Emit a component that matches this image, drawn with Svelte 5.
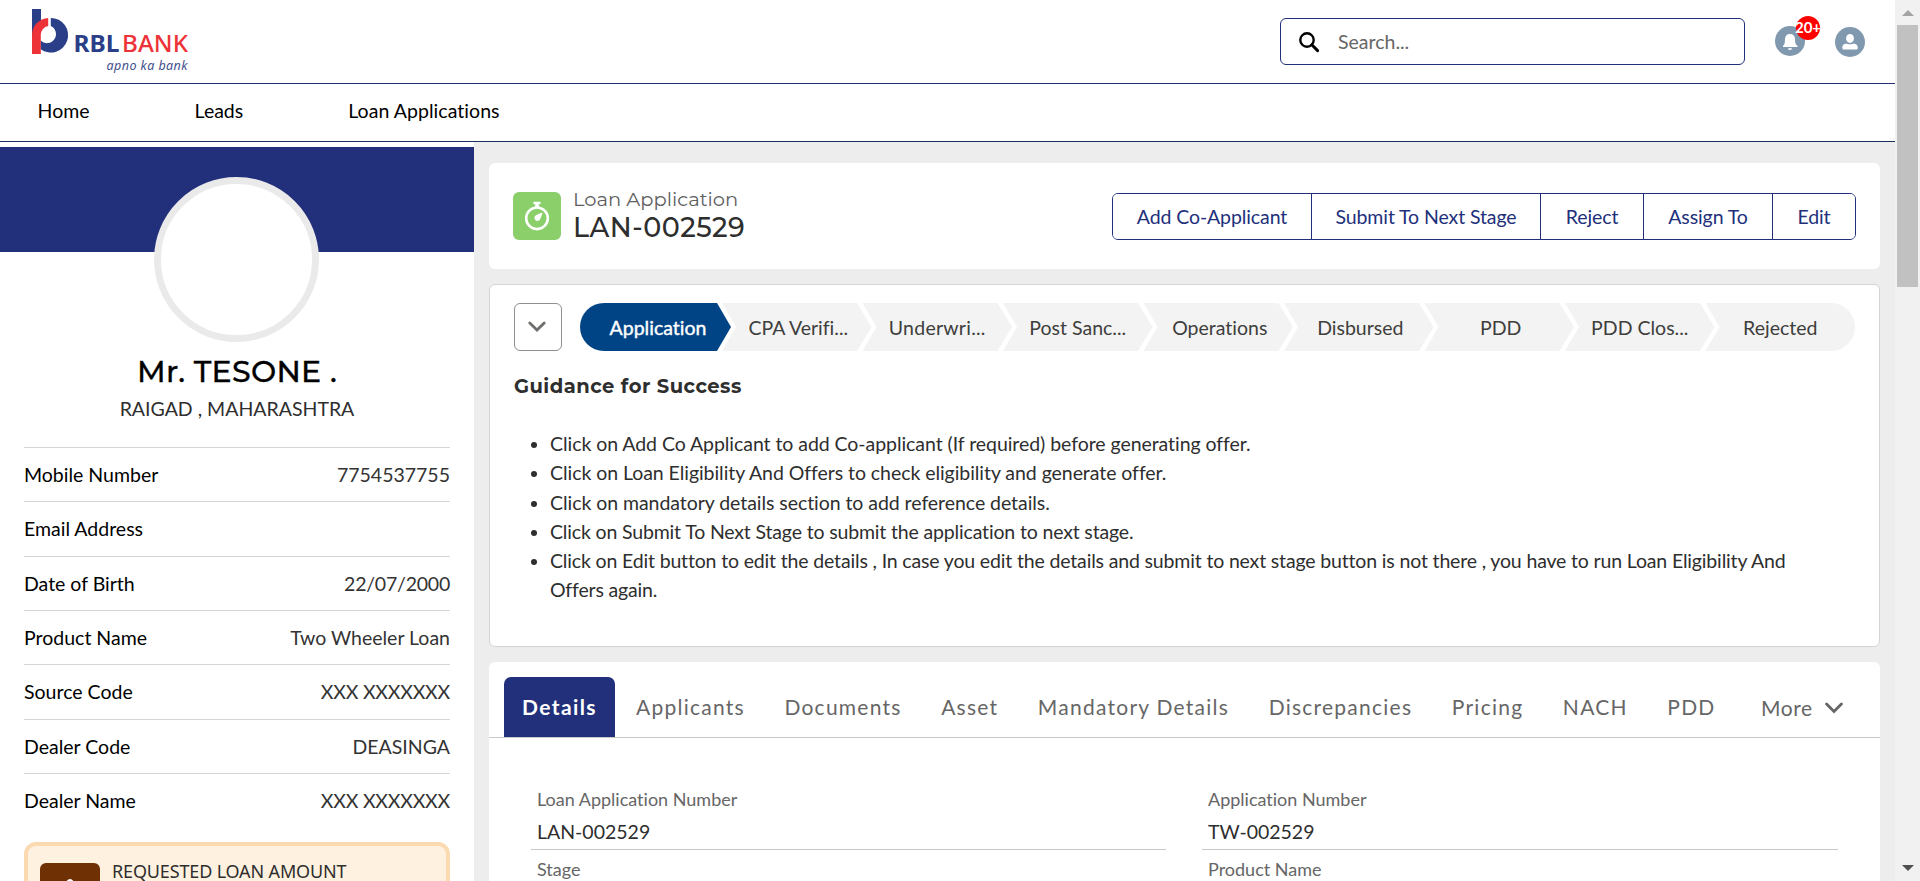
<script>
  const menu = ['Home', 'Leads', 'Loan Applications'];
  const facts = [
    ['Mobile Number', '7754537755'],
    ['Email Address', ''],
    ['Date of Birth', '22/07/2000'],
    ['Product Name', 'Two Wheeler Loan'],
    ['Source Code', 'XXX XXXXXXX'],
    ['Dealer Code', 'DEASINGA'],
    ['Dealer Name', 'XXX XXXXXXX']
  ];
  const actions = ['Add Co-Applicant', 'Submit To Next Stage', 'Reject', 'Assign To', 'Edit'];
  const stages = ['Application', 'CPA Verifi...', 'Underwri...', 'Post Sanc...', 'Operations', 'Disbursed', 'PDD', 'PDD Clos...', 'Rejected'];
  const guidance = [
    ['Click on Add Co Applicant to add Co-applicant (If required) before generating offer.', 'wide'],
    ['Click on Loan Eligibility And Offers to check eligibility and generate offer.', 'wide'],
    ['Click on mandatory details section to add reference details.', 'wide'],
    ['Click on Submit To Next Stage to submit the application to next stage.', 'tight'],
    ['Click on Edit button to edit the details , In case you edit the details and submit to next stage button is not there , you have to run Loan Eligibility And Offers again.', 'tight']
  ];
  const tabs = ['Details', 'Applicants', 'Documents', 'Asset', 'Mandatory Details', 'Discrepancies', 'Pricing', 'NACH', 'PDD'];
  const fields = [
    ['Loan Application Number', 'LAN-002529'],
    ['Application Number', 'TW-002529'],
    ['Stage', ''],
    ['Product Name', '']
  ];
</script>

<div class="window">
  <div class="page">
    <header>
      <svg class="logo" width="160" height="76" viewBox="0 0 160 76">
        <path d="M0 9H9V28L0 38Z" fill="#2b3f88" />
        <path d="M18.8 17.9A17.3 17.3 0 1 1 8.6 49.2L8.6 40.5A9 9 0 1 0 18.8 26Z" fill="#2b3f88" />
        <path d="M0 54V35.2A17.3 17.3 0 0 1 16.2 17.9V26A9 9 0 0 0 8.8 35.2V54Z" fill="#ed3338" />
        <text x="41.5" y="52" class="rbl" textLength="46" lengthAdjust="spacingAndGlyphs">RBL</text>
        <text x="90" y="52" class="bnk" textLength="66" lengthAdjust="spacingAndGlyphs">BANK</text>
        <text x="74.5" y="70" class="tag" textLength="81">apno ka bank</text>
      </svg>
      <div class="tools">
        <div class="search">
          <svg width="22" height="22" viewBox="0 0 22 22" fill="none" stroke="#000">
            <circle cx="9" cy="9" r="6.7" stroke-width="2.4" />
            <path d="M13.8 13.8L19.6 19.6" stroke-width="3" stroke-linecap="round" />
          </svg>
          <span>Search...</span>
        </div>
        <div class="bell">
          <svg width="30" height="30" viewBox="0 0 30 30">
            <circle cx="15" cy="15" r="15" fill="#8199af" />
            <path d="M8 20.4Q8 19.5 9 18.8Q10 17.6 10 13.5Q10 8 15 8Q20 8 20 13.5Q20 17.6 21.2 18.8Q22.6 19.5 22.6 20.4Q22.6 21 22 21H8.4Q8 21 8 20.4Z" fill="#fff" />
            <path d="M13 22.2H17Q16.8 24.1 15 24.1Q13.2 24.1 13 22.2Z" fill="#fff" />
          </svg>
          <b>20+</b>
        </div>
        <svg class="user" width="30" height="30" viewBox="0 0 30 30">
          <circle cx="15" cy="15" r="15" fill="#8199af" />
          <ellipse cx="15" cy="11.4" rx="3.9" ry="4.5" fill="#fff" />
          <path d="M7.3 20.5Q7.3 16.8 11.5 16.4Q15 18.2 18.5 16.4Q22.8 16.8 22.8 20.5V21Q22.8 22.6 21.2 22.6H9Q7.3 22.6 7.3 21Z" fill="#fff" />
        </svg>
      </div>
    </header>
    <nav>
      {#each menu as item}<a>{item}</a>{/each}
    </nav>
    <div class="body">
      <aside>
        <div class="cover"></div>
        <div class="avatar"></div>
        <h1>Mr. TESONE .</h1>
        <p class="place">RAIGAD , MAHARASHTRA</p>
        <dl>
          {#each facts as [k, v]}
            <div><dt>{k}</dt><dd class:snug={v.includes('/') || v.startsWith('XXX')}>{v}</dd></div>
          {/each}
        </dl>
        <div class="amount">
          <div class="coin">
            <svg width="60" height="60" viewBox="0 0 60 60"><path d="M25 40V21Q27 16 30 16Q33 16 35 21V40Z" fill="#fff" /></svg>
          </div>
          <span>REQUESTED LOAN AMOUNT</span>
        </div>
      </aside>
      <main>
        <section class="card head">
          <svg width="48" height="48" viewBox="0 0 48 48">
            <rect width="48" height="48" rx="6" fill="#8bcf6a" />
            <circle cx="24" cy="26.3" r="10.8" fill="none" stroke="#fff" stroke-width="2.6" />
            <path d="M21 9.8H27Q27.6 9.8 27.6 10.5V11.4Q27.6 12.2 26.8 12.2H25.8V15.5H22.2V12.2H21.2Q20.4 12.2 20.4 11.4V10.5Q20.4 9.8 21 9.8Z" fill="#fff" />
            <path d="M28.3 20.8Q29.6 20.6 29.3 22L27 27.4A3 3 0 1 1 22.9 23.3Z" fill="#fff" />
          </svg>
          <div class="title">
            <small>Loan Application</small>
            <strong>LAN-002529</strong>
          </div>
          <div class="actions">
            {#each actions as a}<button>{a}</button>{/each}
          </div>
        </section>

        <section class="card coach">
          <div class="pathrow">
            <button class="toggle" aria-label="Toggle guidance">
              <svg width="18" height="12" viewBox="0 0 18 12"><path d="M1.8 2L9 9L16.2 2" fill="none" stroke="#706e6b" stroke-width="2.8" stroke-linecap="round" /></svg>
            </button>
            <ol>
              {#each stages as s}<li><span>{s}</span></li>{/each}
            </ol>
          </div>
          <h2>Guidance for Success</h2>
          <ul>
            {#each guidance as [g, fit]}<li class={fit}>{g}</li>{/each}
          </ul>
        </section>

        <section class="card details">
          <div class="tabs">
            {#each tabs as t, i}<a class:active={i === 0}>{t}</a>{/each}
            <a class="more">More
              <svg width="18" height="12" viewBox="0 0 18 12"><path d="M1.6 2L9 9.6L16.4 2" fill="none" stroke="#666" stroke-width="2.8" stroke-linecap="round" /></svg>
            </a>
          </div>
          <div class="fields">
            {#each fields as [k, v]}
              <div class="field"><label>{k}</label><output>{v}</output></div>
            {/each}
          </div>
        </section>
      </main>
    </div>
  </div>
  <div class="scroll">
    <svg width="12" height="6" viewBox="0 0 12 6"><path d="M6 0L12 6H0Z" fill="#a3a3a3" /></svg>
    <i></i>
    <svg class="down" width="12" height="6" viewBox="0 0 12 6"><path d="M0 0H12L6 6Z" fill="#505050" /></svg>
  </div>
</div>

<style>
  :global(body) { margin: 0; overflow: hidden; }
  .window, .window * { box-sizing: border-box; }
  .window { display: flex; width: 1920px; height: 881px; overflow: hidden; background: #fff; font-family: Lato, sans-serif; font-size: 19.5px; line-height: 29.25px; color: #2e2e2e; font-variant-ligatures: none; }
  .page { width: 1895px; display: flex; flex-direction: column; }
  header { height: 84px; flex: none; border-bottom: 1px solid #22307b; display: flex; justify-content: space-between; padding: 0 30px 0 32px; }
  .logo { font-family: "Noto Sans", sans-serif; }
  .rbl { font-size: 24px; font-weight: 700; fill: #2b3f88; }
  .bnk { font-size: 24px; font-weight: 500; fill: #ed3338; }
  .tag { font-size: 12.5px; font-style: italic; fill: #444f8c; }
  .tools { display: flex; }
  .search { width: 465px; height: 47px; margin-top: 18px; border: 1px solid #22307b; border-radius: 6px; display: flex; align-items: center; padding-left: 17px; color: #666; }
  .search span { margin-left: 18px; }
  .bell { position: relative; margin: 26px 30px 0 30px; height: 30px; }
  .bell svg { display: block; }
  .bell b { position: absolute; left: 21px; top: -10px; width: 24px; height: 24px; border-radius: 50%; background: #f00; color: #fff; font-size: 15px; line-height: 23px; display: flex; justify-content: center; }
  .user { margin-top: 27px; }
  nav { height: 58px; flex: none; border-bottom: 1px solid #16325c; display: flex; gap: 105px; padding: 12px 37.6px 0; color: #000; }
  nav a:last-child { letter-spacing: .05px; }
  .body { flex: 1; display: flex; min-height: 0; }
  aside { width: 474px; flex: none; padding-top: 5px; display: flex; flex-direction: column; align-items: center; }
  .cover { width: 100%; height: 105px; flex: none; background: #22307b; }
  .avatar { width: 165px; height: 165px; flex: none; margin: -75px 1px 0 0; border: 7px solid #eaeaea; border-radius: 50%; background: #fff; }
  h1 { margin: 9px 0 0; flex: none; font-family: Montserrat, Inter, sans-serif; font-weight: 500; font-size: 30px; line-height: 41px; letter-spacing: .3px; color: #000; -webkit-text-stroke: .3px #000; }
  .place { margin: 2px 0 0; line-height: 29px; height: 53px; flex: none; }
  dl { margin: 0; width: 426px; flex: none; }
  dl div { display: flex; justify-content: space-between; height: 54.35px; border-top: 1px solid #d4d4d4; padding-top: 12px; }
  dt { color: #000; }
  dd { margin: 0; color: #333; }
  .snug { letter-spacing: -.22px; }
  .amount { margin-top: 14.5px; width: 426px; height: 100px; flex: none; border: 4px solid #fbd9b1; border-radius: 12px; background: #fff1e0; display: flex; padding: 17px 12px; font-family: "Noto Sans", sans-serif; font-size: 18px; line-height: 16px; letter-spacing: -.15px; }
  .coin { width: 60px; height: 60px; margin-right: 12px; background: #6f3003; border-radius: 6px; }
  main { flex: 1; min-width: 0; background: #ededed; padding: 21px 15px 0; display: flex; flex-direction: column; gap: 15px; }
  .card { background: #fff; border-radius: 6px; flex: none; }
  .head { height: 106px; padding: 29px 24px 0; display: flex; }
  .title { margin-left: 12px; flex: 1; font-family: Montserrat, Inter, sans-serif; display: flex; flex-direction: column; }
  small { font-size: 19.5px; line-height: 24px; color: #606060; margin-top: -5px; }
  strong { font-weight: 500; font-size: 27px; line-height: 33px; letter-spacing: .5px; color: #2e2e2e; }
  button { font: inherit; background: #fff; padding: 0; }
  .actions { display: flex; height: 47px; margin-top: 1px; border: 1px solid #22307b; border-radius: 6px; overflow: hidden; }
  .actions button { border: 0; color: #22307b; width: 129px; letter-spacing: -.1px; white-space: nowrap; }
  .actions button:nth-child(1) { width: 198px; }
  .actions button:nth-child(2) { width: 229px; }
  .actions button:nth-child(3) { width: 103px; }
  .actions button:nth-child(5) { width: 83px; }
  .actions button + button { border-left: 1px solid #22307b; }
  .coach { height: 363px; border: 1px solid #d4d4d4; padding: 18px 24px 0; }
  .pathrow { display: flex; }
  .toggle { width: 48px; height: 48px; border: 1px solid #8f8f8f; border-radius: 6px; display: flex; align-items: center; justify-content: center; padding-right: 3px; }
  ol { list-style: none; margin: 0 0 0 18px; padding: 0; display: flex; }
  ol li { width: 149.5px; margin-left: -9px; height: 48px; background: #f3f3f3; clip-path: polygon(0 0, 135px 0, 100% 50%, 135px 100%, 0 100%, 14px 50%); display: flex; align-items: center; justify-content: center; color: #3e3e3c; padding-top: 2px; }
  ol li span { padding-left: 3px; }
  ol li:first-child { width: 151px; margin: 0; background: #014486; color: #fff; border-radius: 24px 0 0 24px; clip-path: polygon(0 0, 137px 0, 100% 50%, 137px 100%, 0 100%); -webkit-text-stroke: .4px #fff; }
  ol li:first-child span { padding-left: 5px; }
  ol li:nth-child(3) span { letter-spacing: .25px; padding: 0; }
  ol li:nth-child(4) span { padding: 0; }
  ol li:nth-child(8) span { padding: 0; }
  ol li:last-child { clip-path: polygon(0 0, 100% 0, 100% 100%, 0 100%, 14px 50%); border-radius: 0 24px 24px 0; }
  ol li:last-child span { padding: 0; }
  h2 { margin: 20px 0 0; font-family: Montserrat, Inter, sans-serif; font-size: 19.5px; line-height: 31px; font-weight: 700; letter-spacing: .47px; }
  ul { margin: 27px 24px 0 36px; padding: 0; }
  .wide { letter-spacing: -.055px; }
  .tight { letter-spacing: -.16px; }
  .details { height: 300px; }
  .tabs { height: 76px; padding: 15px 15px 0; border-bottom: 1px solid #c9c9c9; display: flex; font-size: 21px; letter-spacing: 1.25px; color: #666; }
  .tabs a { height: 60px; line-height: 60px; padding: 0 18px; margin-right: 3.5px; white-space: nowrap; }
  .tabs .active { background: #22307b; color: #fff; font-weight: 700; letter-spacing: 1.4px; border-radius: 7px 7px 0 0; margin-right: 3px; }
  .tabs .more { letter-spacing: .5px; padding-left: 24px; padding-top: 1px; display: flex; align-items: center; gap: 13px; }
  .fields { display: grid; grid-template-columns: 635px 636px; column-gap: 36px; padding: 48px 42px 0; }
  .field { border-bottom: 1px solid #c9c9c9; height: 64px; padding: 0 6px; display: flex; flex-direction: column; }
  .field + .field + .field { margin-top: 6px; }
  label { font-size: 18px; line-height: 27px; color: #666; }
  output { color: #2e2e2e; margin-top: 4px; }
  .scroll { width: 25px; background: #f1f1f1; display: flex; flex-direction: column; align-items: center; padding-top: 10px; }
  .scroll i { width: 21px; height: 262px; margin-top: 9px; background: #c1c1c1; }
  .down { margin-top: auto; margin-bottom: 10px; }
</style>
